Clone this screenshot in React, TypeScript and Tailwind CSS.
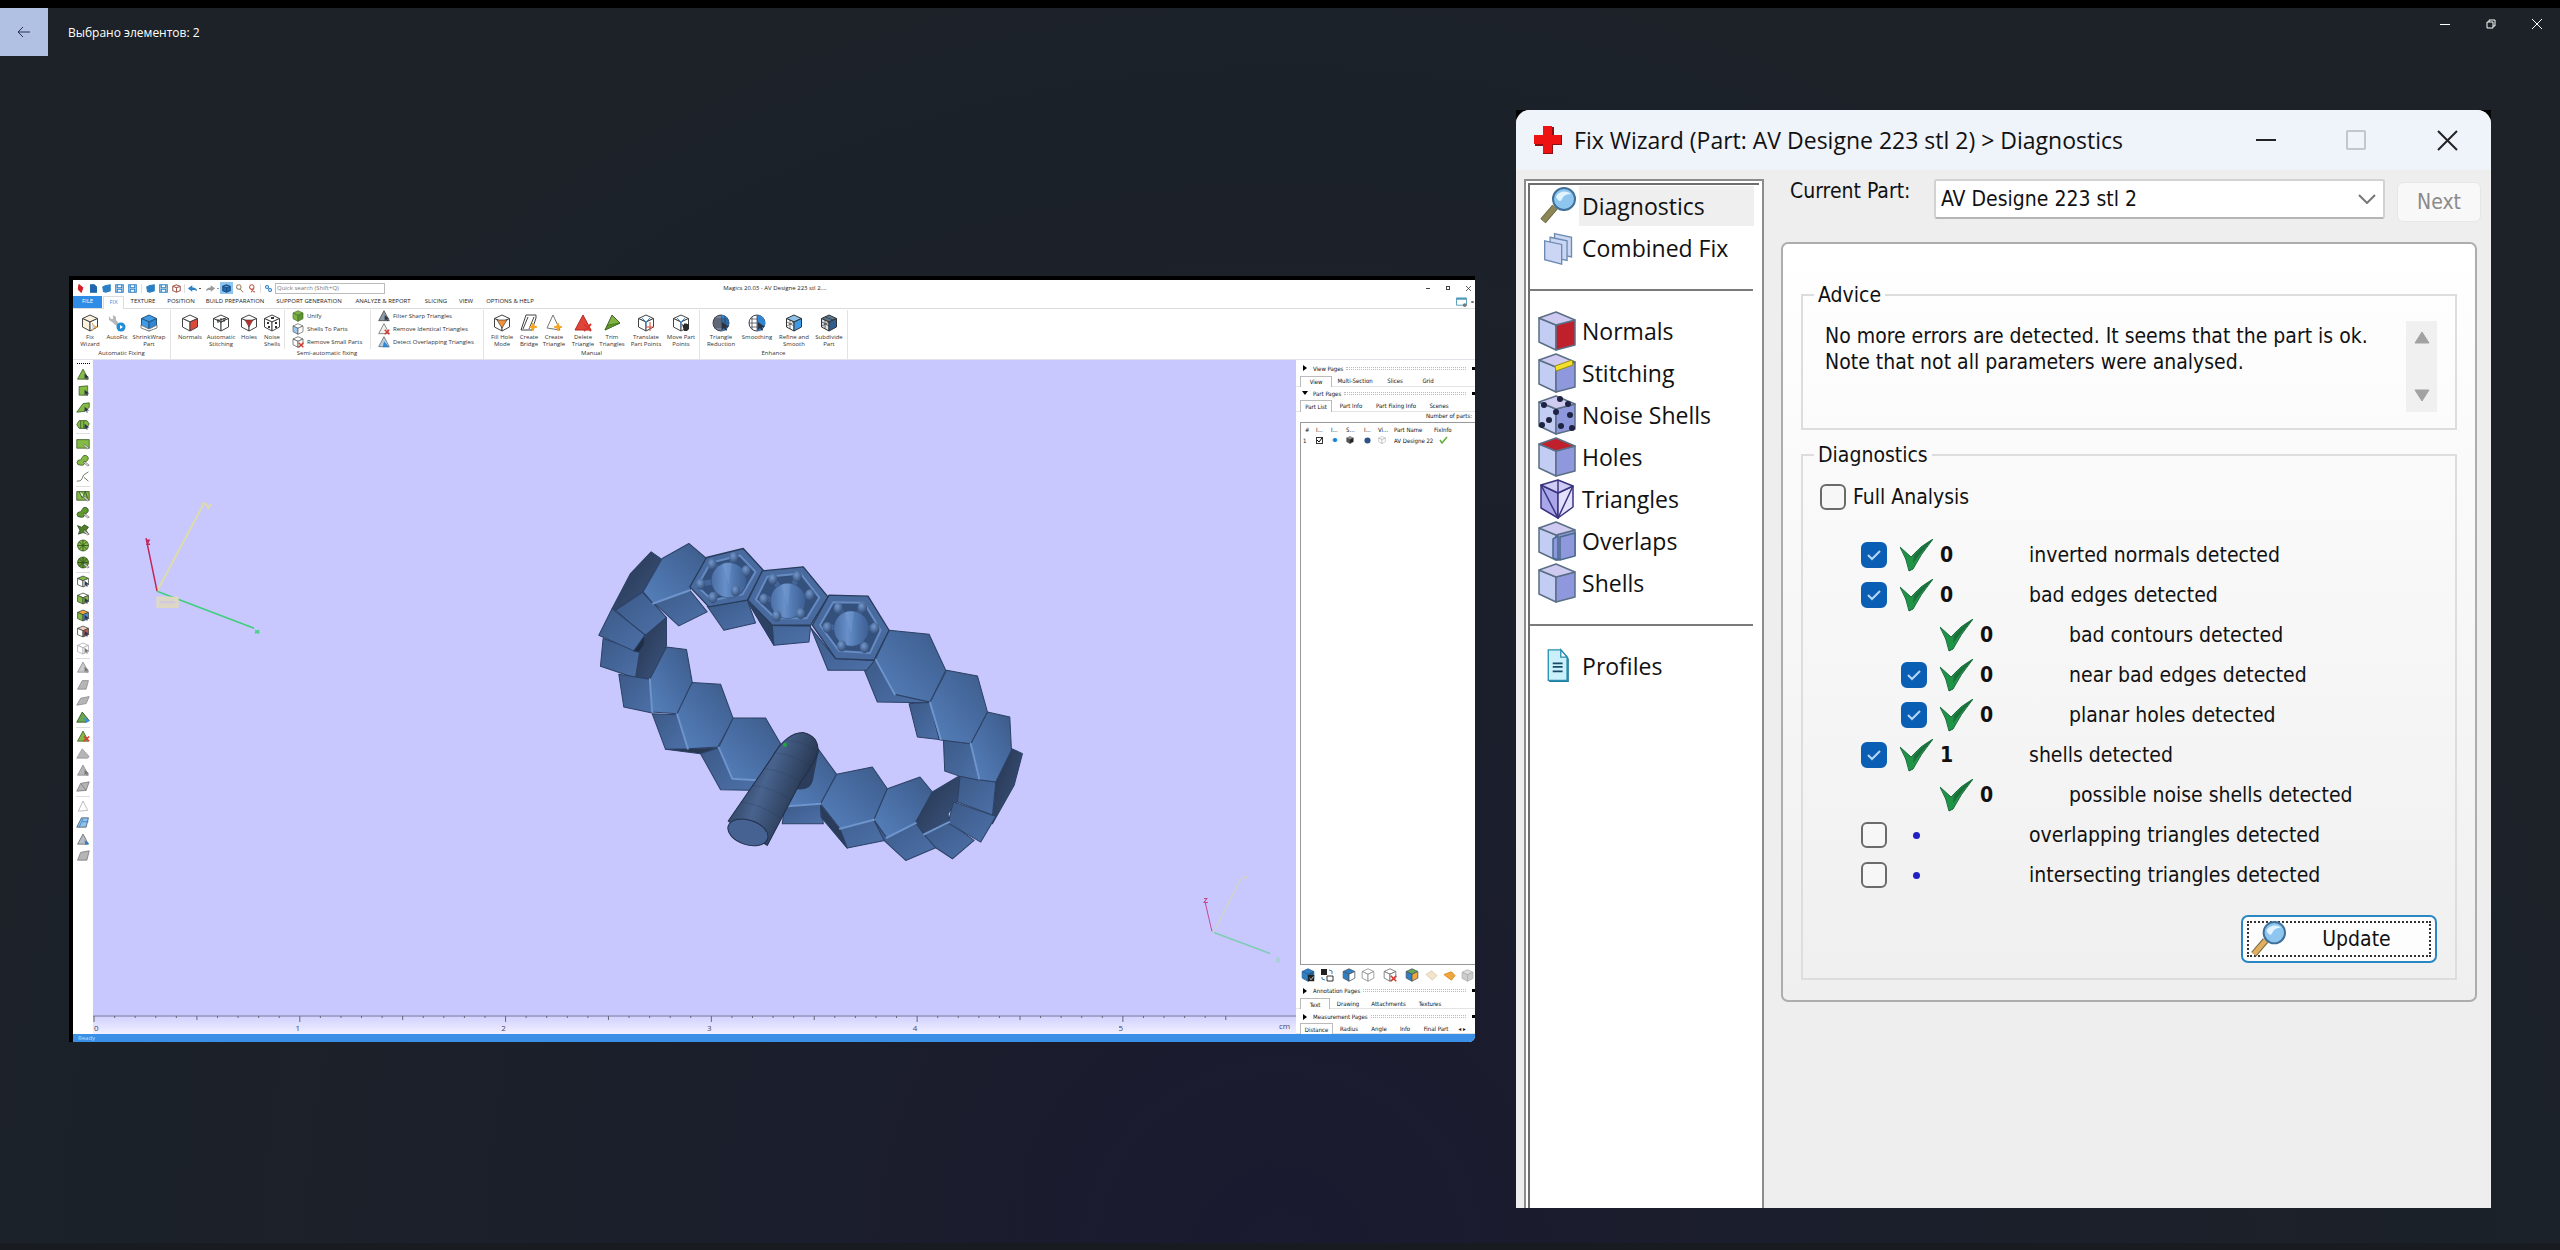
import type { ReactNode } from "react";

const SMALL = "font-['Open_Sans','Noto_Sans',sans-serif] text-[6px] leading-[7px]";
const PANEL = "font-['DejaVu_Sans_Condensed','DejaVu_Sans',sans-serif] text-[6px] leading-[7px]";

/* ---------- small wireframe cube used all over the ribbon ---------- */
function Cube({
  top = "#fff",
  left = "#fff",
  right = "#fff",
  line = "#444",
  className = "size-[18px]",
  children,
}: {
  top?: string;
  left?: string;
  right?: string;
  line?: string;
  className?: string;
  children?: ReactNode;
}) {
  return (
    <svg viewBox="0 0 18 18" className={className} aria-hidden="true">
      <g stroke={line} strokeWidth="1" strokeLinejoin="round">
        <path d="M1.5 4.5 9 1l7.500 3.500L9 8z" fill={top} />
        <path d="M1.500 4.500 9 8v9l-7.500-4z" fill={left} />
        <path d="M16.500 4.500 9 8v9l7.500-4z" fill={right} />
      </g>
      {children}
    </svg>
  );
}

function Tri({
  fill = "#8cbf45",
  line = "#4a5a3a",
  children,
  className = "h-[18px] w-[18px]",
  d = "M9 1 17 16 1 16z",
}: {
  fill?: string;
  line?: string;
  children?: ReactNode;
  className?: string;
  d?: string;
}) {
  return (
    <svg viewBox="0 0 18 18" className={className} aria-hidden="true">
      <path d={d} fill={fill} stroke={line} strokeLinejoin="round" />
      {children}
    </svg>
  );
}

const star = <path d="M13 9l1 3 3 1-3 1-1 3-1-3-3-1 3-1z" fill="#f5a623" stroke="#f5a623" />;
const redX = <path d="M10 10l7 7M17 10l-7 7" stroke="#d9372c" strokeWidth="2" />;
const cursor = <path d="M10 8v8l2-2 2 3 1-1-1-3h3z" fill="#2d3340" />;

/* ---------- ribbon ---------- */
type Item = { w: string; l1: string; l2?: string; icon: ReactNode };

const autoFix: Item[] = [
  {
    w: "w-[34px]",
    l1: "Fix",
    l2: "Wizard",
    icon: (
      <Cube top="#fdf3dd" left="#fdf3dd">
        <path d="M11 9l2 3 3 1-3 1-2 3" stroke="#e8a33c" fill="#cfe2f5" />
      </Cube>
    ),
  },
  {
    w: "w-5",
    l1: "AutoFix",
    icon: (
      <svg viewBox="0 0 18 18" className="size-[18px]" aria-hidden="true">
        <path d="M1 2v4l3 2 7 6 2-2-5-6V3L5 1v4L3 5z" fill="#b4b9bd" />
        <circle cx="13" cy="13" r="4.500" fill="#1b8fd8" />
        <path d="M12 11v4l3-2z" fill="#fff" />
      </svg>
    ),
  },
  {
    w: "w-11",
    l1: "ShrinkWrap",
    l2: "Part",
    icon: (
      <Cube top="#3f9be6" left="#3f9be6" right="#2f86d3" line="#25557f">
        <path d="M1 11l8 4 8-4v3l-8 3-8-3z" fill="#fff" stroke="#666" strokeWidth=".8" />
      </Cube>
    ),
  },
];

const semiAuto: Item[] = [
  { w: "w-[38px]", l1: "Normals", icon: <Cube right="#dc4a38" /> },
  {
    w: "w-6",
    l1: "Automatic",
    l2: "Stitching",
    icon: (
      <Cube>
        <path d="M6 5v4M9 4v5M12 4v4M5 7l9-3" stroke="#333" fill="none" />
      </Cube>
    ),
  },
  {
    w: "w-8",
    l1: "Holes",
    icon: (
      <Cube>
        <path d="M5 6h8l-4 7z" fill="#b9302b" stroke="#444" strokeWidth=".6" />
      </Cube>
    ),
  },
  {
    w: "w-[14px]",
    l1: "Noise",
    l2: "Shells",
    icon: (
      <Cube>
        <path d="M4 8h2v2H4zM8 3h3v2H8zM12 8h2v2h-2zM5 12h2v2H5zM12 12h2v2h-2z" fill="#333" />
      </Cube>
    ),
  },
];

const manual: Item[] = [
  {
    w: "w-9",
    l1: "Fill Hole",
    l2: "Mode",
    icon: (
      <Cube>
        <path d="M4 6h10l-5 8z" fill="#f0933a" stroke="#444" strokeWidth=".7" />
      </Cube>
    ),
  },
  {
    w: "w-[18px]",
    l1: "Create",
    l2: "Bridge",
    icon: (
      <Tri fill="#fff" line="#444" d="M6 1h10v3l-4 12H1z">
        <path d="M8 3 3 15M14 3 9 15" stroke="#444" />
        {star}
      </Tri>
    ),
  },
  { w: "w-8", l1: "Create", l2: "Triangle", icon: <Tri fill="#fff" line="#777" d="M8 1 15 16 2 14z">{star}</Tri> },
  { w: "w-[26px]", l1: "Delete", l2: "Triangle", icon: <Tri fill="#e0443a" line="#b32b25">{redX}</Tri> },
  {
    w: "w-8",
    l1: "Trim",
    l2: "Triangles",
    icon: (
      <Tri fill="#7fb53f" d="M9 1 17 9 2 16z">
        <path d="M2 16 17 9 5 11z" fill="#5f9a2c" stroke="#3e6b1d" strokeWidth=".7" />
      </Tri>
    ),
  },
  {
    w: "w-9",
    l1: "Translate",
    l2: "Part Points",
    icon: (
      <Cube>
        <path d="M5 4l4 4 4-4M9 8v6" stroke="#3a8fd6" fill="none" />
        <path d="M13 8v9M9 13h8" stroke="#e0443a" />
      </Cube>
    ),
  },
  {
    w: "w-[34px]",
    l1: "Move Part",
    l2: "Points",
    icon: (
      <Cube>
        <path d="M5 4l4 4 4-4M9 8v5" stroke="#3a8fd6" fill="none" />
        <path d="M10 10l2 1V9l1 1 1-1 1 1 2 0v5l-2 2h-3z" fill="#2a2a2a" />
      </Cube>
    ),
  },
];

function Globe({ fine }: { fine?: boolean }) {
  return (
    <svg viewBox="0 0 18 18" className="size-[18px]" aria-hidden="true">
      <circle cx="9" cy="9" r="8" fill={fine ? "#9db1c2" : "#fff"} stroke="#445" />
      <path d="M9 1a8 8 0 0 1 0 16z" fill="#2f86d3" />
      <path
        d={fine ? "M9 1v16M5 2v14M13 2v14M1 9h16M2 5h14M2 13h14M3 3v12M7 1v16M1 7h16M1 11h16" : "M9 1v16M4 3v12M1 9h8M3 5h6M3 13h6"}
        stroke="#334"
        strokeWidth=".7"
      />
      {cursor}
    </svg>
  );
}

const enhance: Item[] = [
  { w: "w-[42px]", l1: "Triangle", l2: "Reduction", icon: <Globe fine /> },
  { w: "w-[30px]", l1: "Smoothing", icon: <Globe /> },
  {
    w: "w-11",
    l1: "Refine and",
    l2: "Smooth",
    icon: (
      <Cube right="#3f9be6" top="#8fc1ea" line="#333">
        <path d="M2 8l7 4M5 6v9M2 12l7-4" stroke="#444" strokeWidth=".7" />
      </Cube>
    ),
  },
  {
    w: "w-[26px]",
    l1: "Subdivide",
    l2: "Part",
    icon: (
      <Cube right="#2f5f8e" top="#5b7894" left="#d7dee5" line="#333">
        <path d="M2 8l7 4M5 6v9M2 12l7-4M5 3l8 3" stroke="#333" strokeWidth=".7" />
      </Cube>
    ),
  },
];

function Items({ items }: { items: Item[] }) {
  return (
    <div className="flex">
      {items.map((it) => (
        <button key={it.l1 + it.l2} className={`flex flex-col items-center whitespace-nowrap ${it.w}`}>
          <span className="mb-[2px] block">{it.icon}</span>
          <span>{it.l1}</span>
          {it.l2 && <span>{it.l2}</span>}
        </button>
      ))}
    </div>
  );
}

function Group({ label, className = "", children }: { label: string; className?: string; children: ReactNode }) {
  return (
    <section className={`flex h-[49px] shrink-0 flex-col justify-between border-r border-[#e3e3e3] pt-[4px] pb-[2px] ${className}`}>
      <div className="flex">{children}</div>
      <div className="text-center">{label}</div>
    </section>
  );
}

function Lines({ rows, className }: { rows: [string, ReactNode][]; className: string }) {
  return (
    <div className={`-mt-[4px] flex flex-col ${className}`}>
      {rows.map(([t, i]) => (
        <button key={t} className="flex h-[13px] items-center gap-[3px] whitespace-nowrap">
          {i}
          {t}
        </button>
      ))}
    </div>
  );
}

const sm = "size-[12px] shrink-0";

function Ribbon() {
  return (
    <div className={`flex h-[51px] border-b border-[#e2e2ee] pt-px text-[#333] ${SMALL}`}>
      <Group label="Automatic Fixing" className="w-[98px]">
        <Items items={autoFix} />
      </Group>
      <Group label="Semi-automatic fixing" className="w-[313px]">
        <Items items={semiAuto} />
        <Lines
          className="ml-[5px] w-[86px] border-l border-[#e3e3e3] pl-[7px]"
          rows={[
            ["Unify", <Cube key="i" className={sm} top="#7db343" left="#7db343" right="#5e9430" line="#44702a" />],
            ["Shells To Parts", <Cube key="i" className={sm} left="#9cc7ee" line="#555" />],
            ["Remove Small Parts", <Cube key="i" className={sm}>{redX}</Cube>],
          ]}
        />
        <Lines
          className="border-l border-[#e3e3e3] pl-[7px]"
          rows={[
            ["Filter Sharp Triangles", <Tri key="i" className={sm} fill="#8c9aa8" line="#333">{cursor}</Tri>],
            ["Remove Identical Triangles", <Tri key="i" className={sm} fill="#f1f1f1" line="#555">{redX}</Tri>],
            ["Detect Overlapping Triangles", <Tri key="i" className={sm} fill="#b9cfe2" line="#555"><path d="M9 8l8 9H7z" fill="#2f86d3" /></Tri>],
          ]}
        />
      </Group>
      <Group label="Manual" className="w-[216px]">
        <Items items={manual} />
      </Group>
      <Group label="Enhance" className="w-[148px]">
        <Items items={enhance} />
      </Group>
    </div>
  );
}

/* ---------- quick access bar ---------- */
function Glyph({ d, fill = "none", stroke = "#2a7fc4", bg }: { d: string; fill?: string; stroke?: string; bg?: boolean }) {
  return (
    <button className={`grid h-[12px] w-[13px] shrink-0 place-items-center ${bg ? "bg-[#8fc4f0]" : ""}`} aria-label="Quick access command">
      <svg viewBox="0 0 12 12" className="size-[9px]">
        <path d={d} fill={fill} stroke={stroke} strokeWidth="1.400" />
      </svg>
    </button>
  );
}

function QuickBar() {
  const save = "M1 1h10v10H1zM3 1v4h6V1M3 11V7h6v4";
  const cube = "M1 3l5-2 5 2v6l-5 2-5-2zM1 3l5 2 5-2M6 5v6";
  return (
    <div className={`flex h-[16px] items-center pt-px pl-px ${SMALL}`}>
      <Glyph d="M4 1l5 4-2 6-4-4z" fill="#d42027" stroke="#d42027" />
      <Glyph d="M2 1h5l3 3v7H2z" fill="#1f66ad" stroke="#1f66ad" />
      <Glyph d="M1 4l4-2 6-1v8l-6 2-3-1z" fill="#2a7fc4" />
      <Glyph d={save} />
      <Glyph d={save} />
      <span className="mx-[2px] h-[9px] w-px bg-[#ddd]" />
      <Glyph d="M1 4l4-2 6-1v8l-6 2-3-1z" fill="#2a7fc4" />
      <Glyph d={save} />
      <Glyph d={cube} stroke="#a55b52" />
      <span className="mx-px h-[9px] w-px bg-[#ddd]" />
      <Glyph d="M1 6l4-3v2c3 0 5 1 6 3-2-1-4-1-6-1v2z" fill="#2a8be0" />
      <span className="mr-[3px] h-px w-[2px] bg-[#555]" />
      <Glyph d="M11 6L7 3v2C4 5 2 6 1 8c2-1 4-1 6-1v2z" fill="#999" stroke="#999" />
      <span className="mr-px h-px w-[2px] bg-[#999]" />
      <Glyph bg d={cube} fill="#1f6cb5" stroke="#174f86" />
      <Glyph d="M5 1a3 3 0 1 0 .1 0M7 7l4 4" stroke="#9a8468" />
      <Glyph d="M5 1a3 3 0 1 0 .1 0M3 6l6 5M8 6l-4 5" stroke="#c25a4a" />
      <span className="mx-px h-[9px] w-px bg-[#ddd]" />
      <Glyph d="M4 2a2 2 0 1 0 .1 0M8 6a2 2 0 1 0 .1 0" />
      <input
        aria-label="Quick search"
        placeholder="Quick search (Shift+Q)"
        className="h-[11px] w-[110px] border border-[#bbb] bg-white px-px text-[6px] placeholder:text-[#777]"
      />
      <div className="flex-1 pr-[260px] text-center text-[#222]">Magics 20.03 - AV Designe 223 stl 2....</div>
      <div className="flex gap-[14px] pr-[4px] text-[#444]">
        <button aria-label="Minimize viewer" className="grid h-2 w-[6px] place-items-center"><span className="h-px w-[4px] bg-[#444]" /></button>
        <button aria-label="Restore viewer" className="grid h-2 w-[6px] place-items-center"><span className="size-[4px] border border-[#444]" /></button>
        <button aria-label="Close viewer" className="grid h-2 w-[6px] place-items-center">
          <svg viewBox="0 0 6 6" className="size-[5px]"><path d="M0 0l6 6M6 0L0 6" stroke="#444" /></svg>
        </button>
      </div>
    </div>
  );
}

const tabs: [string, string][] = [
  ["TEXTURE", "w-[38px]"],
  ["POSITION", "w-[38px]"],
  ["BUILD PREPARATION", "w-[70px]"],
  ["SUPPORT GENERATION", "w-[78px]"],
  ["ANALYZE & REPORT", "w-[70px]"],
  ["SLICING", "w-9"],
  ["VIEW", "w-6"],
  ["OPTIONS & HELP", "w-[64px]"],
];

function TabBar() {
  return (
    <div className={`flex h-[13px] items-stretch border-b border-[#dcdcdc] text-[#222] ${SMALL}`}>
      <button className="w-[29px] bg-[#2e8be6] text-white">FILE</button>
      <button className="-mb-px ml-px w-[21px] border border-b-0 border-[#dcdcdc] bg-white text-[#3a8fd6]">FIX</button>
      {tabs.map(([t, w]) => (
        <button key={t} className={`flex shrink-0 items-center justify-center whitespace-nowrap ${w}`}>{t}</button>
      ))}
      <div className="flex flex-1 items-center justify-end gap-[3px]">
        <svg viewBox="0 0 13 11" className="h-[10px] w-[13px]" aria-hidden="true">
          <path d="M1 1h11v8H1z" fill="#fff" stroke="#4f9bb8" />
          <path d="M1 1h11v2H1z" fill="#4f9bb8" />
          <circle cx="10" cy="9" r="2" fill="#777" />
        </svg>
        <span className="mr-px h-[2px] w-[3px] rounded-full bg-[#777]" />
      </div>
    </div>
  );
}

/* ---------- marking tool strip ---------- */
const G = "#83bb45";
const toolGroups: ReactNode[][] = (() => {
  const t = (d: string, fill: string, line: string, extra?: ReactNode) => (
    <svg viewBox="0 0 18 16" className="h-[13px] w-[14px]" aria-hidden="true">
      <path d={d} fill={fill} stroke={line} strokeLinejoin="round" />
      {extra}
    </svg>
  );
  const cur = <path d="M11 7v7l2-2 1 3 1-1-1-2h3z" fill="#2b3350" />;
  const greyCur = <path d="M11 7v7l2-2 1 3 1-1-1-2h3z" fill="#777" />;
  const pen = <path d="M11 9l6 5-2 1-5-4z" fill="#ddd" stroke="#555" strokeWidth=".7" />;
  const tri = "M9 1 16 14H2z";
  const two = "M6 7a4 3 0 1 0 0 7 4 3 0 0 0 4-5 4 4 0 1 0-2-5z";
  const band = "M1 14 9 3l8-1v6l-6 5z";
  const round = "M9 1a7 7 0 1 0 .1 0M9 1v14M2 8h14M4 3l10 10M14 3 4 13";
  const box = (a: string, b: string, c: string, line = "#3f4a3a") => (
    <svg viewBox="0 0 18 16" className="h-[13px] w-[14px]" aria-hidden="true">
      <g stroke={line} strokeLinejoin="round">
        <path d="M2 4l7-3 7 3-7 3z" fill={a} />
        <path d="M2 4l7 3v8l-7-3z" fill={b} />
        <path d="M16 4 9 7v8l7-3z" fill={c} />
      </g>
      {line === "#aaa" ? greyCur : cur}
    </svg>
  );
  const grey = "#b5b5b5";
  return [
    [t(tri, G, "#3d5a26", cur), t("M4 3l11-1v12H4z", G, "#3d5a26", cur), t(band, G, "#3d5a26", cur), t("M4 3h10l3 4-3 6H4L1 8zM6 3v10M10 3v10", G, "#3d5a26", cur)],
    [t("M1 3h16v11H1z", G, "#3d5a26", pen), t(two, G, "#3d5a26", pen), t("M1 14c8 0 6-4 9-8l6-4M10 9l6 5", "none", "#4a5a3a")],
    [t("M1 3h16v11H1zM4 3l4 8 4-8 3 9", G, "#2f4a20", pen), t(two, "#5f9a2c", "#2f4a20", pen), t("M2 3l5 2 4-3 5 3-3 4 3 5-7-2-6 2 2-5z", "#4f7f2a", "#2f4a20", pen), t(round, G, "#2f4a20"), t(round, "#5f9a2c", "#2f4a20", pen)],
    [box(G, "#fff", "#fff"), box("#fff", G, G), box("#f0a63a", G, "#4a8fd6"), box("#f3c9c4", "#fff", "#c55a50"), box("#fff", "#fff", "#fff", "#aaa")],
    [t(tri, "#c9c9c9", "#888", greyCur), t("M2 14 8 3h8l-3 11z", grey, "#888"), t("M1 14 6 5l11-2-4 9z", grey, "#888"), t("M1 14 8 1l9 11-4 2z", "#6aa84f", "#2f4a20", <path d="M10 8l8 4-5 3z" fill="#3a8fe0" />)],
    [t(tri, G, "#3d5a26", <path d="M10 8l7 6M17 8l-7 6" stroke="#e03a2c" strokeWidth="2" />), t("M1 14 8 2l9 10-2 2z", grey, "#999"), t(tri, grey, "#888", greyCur), t("M1 14 6 4l11-2-4 11zM6 4l7 9", grey, "#777")],
    [t("M9 1 15 13 3 14z", "#fff", "#aaa"), t("M1 14 7 2h9l-3 12z", "#8fc1ea", "#456", <path d="M4 14 9 3M8 7h8" stroke="#2f7fc4" />), t(tri, "#b5bcc4", "#666", <path d="M11 9l6 4-5 2z" fill="#2f7fc4" />), t("M2 14 6 4l11-2-3 12z", grey, "#777")],
  ];
})();

function ToolStrip() {
  return (
    <div className="flex w-5 shrink-0 flex-col items-center bg-white pt-[3px]">
      <div className="w-[13px] border-t border-dotted border-black" />
      <div className="mt-[4px] flex h-[495px] flex-col items-center justify-between">
        {toolGroups.map((g, gi) =>
          [
            gi > 0 ? <span key={`s${gi}`} className="-my-px h-px w-[14px] bg-[#ddd]" /> : null,
            ...g.map((icon, i) => (
              <button key={`${gi}-${i}`} aria-label={`Marking tool ${gi + 1}.${i + 1}`}>{icon}</button>
            )),
          ],
        )}
      </div>
    </div>
  );
}

/* ---------- 3D scene ---------- */
const parts: { p: string; f: string }[] = [
  { p: "212,65 242,86 188,185 105,240 95,235 150,130", f: "url(#dark)" },
  { p: "105,240 188,185 258,262 192,318", f: "url(#side)" },
  { p: "165,443 175,362 200,312 258,262 258,345 212,445", f: "url(#dark)" },
  { p: "68,325 178,362 165,443 60,408", f: "url(#side)" },
  { p: "95,235 195,315 160,362 55,315", f: "url(#side)" },
  { p: "160,362 195,312 190,345 175,366", f: "#1f2c44" },
  { p: "115,432 208,447 215,548 130,530", f: "url(#side)" },
  { p: "208,447 258,350 318,358 335,455 290,550 215,545", f: "url(#face)" },
  { p: "255,657 322,655 410,652 360,670", f: "#27374f" },
  { p: "215,550 290,553 322,655 255,657", f: "url(#side)" },
  { p: "290,550 335,457 420,462 458,565 412,650 322,655", f: "url(#face)" },
  { p: "360,670 415,652 455,745 530,748 510,780 420,778", f: "url(#side)" },
  { p: "415,650 458,563 555,563 600,640 530,750 455,745", f: "url(#face)" },
  { p: "612,828 720,820 728,880 605,880", f: "url(#side)" },
  { p: "640,680 712,655 768,732 720,820 612,828", f: "url(#face)" },
  { p: "720,825 778,895 880,868 912,930 800,953 722,860", f: "url(#side)" },
  { p: "720,825 778,895 800,953 722,860", f: "#2a3c59" },
  { p: "720,820 768,732 875,710 920,775 880,868 778,895", f: "url(#face)" },
  { p: "880,870 918,922 1005,880 1065,952 975,990 912,932", f: "url(#side)" },
  { p: "880,868 920,775 1018,740 1055,785 1005,878 918,922", f: "url(#face)" },
  { p: "1030,912 1105,875 1180,930 1115,985 1065,952", f: "url(#side)" },
  { p: "1005,875 1055,785 1138,735 1130,812 1102,850 1105,878 1030,912", f: "url(#dark)" },
  { p: "1245,755 1293,655 1325,670 1300,765 1235,880 1238,840", f: "url(#dark)" },
  { p: "1118,815 1245,858 1200,935 1102,878", f: "url(#side)" },
  { p: "1138,738 1245,755 1235,854 1130,815", f: "url(#side)" },
  { p: "1088,628 1170,640 1195,750 1138,738 1092,722", f: "url(#side)" },
  { p: "1170,640 1220,545 1287,560 1292,660 1245,755 1195,748", f: "url(#face)" },
  { p: "985,520 1048,515 1082,628 1010,620", f: "url(#side)" },
  { p: "1048,515 1098,420 1190,437 1220,545 1170,640 1075,628", f: "url(#face)" },
  { p: "845,405 885,388 942,492 1048,517 890,515", f: "url(#side)" },
  { p: "885,385 925,300 1045,312 1095,420 1048,515 942,492", f: "url(#face)" },
  { p: "690,292 765,385 882,390 858,420 742,420", f: "url(#side)" },
  { p: "502,215 575,286 690,288 685,335 580,345", f: "url(#side)" },
  { p: "502,215 575,286 580,345", f: "#2d4163" },
  { p: "380,228 500,210 525,278 430,300", f: "url(#side)" },
  { p: "188,188 218,220 328,180 380,245 295,287", f: "url(#side)" },
  { p: "188,185 245,85 325,40 378,85 328,180 218,220", f: "url(#face)" },
];

const glints =
  "M218,220 328,180M208,447 215,545M290,552 322,655M415,652 455,745 530,750M612,828 720,820M778,895 880,868M918,922 1005,878M1030,912 1105,875M1170,640 1195,745M1048,517 1080,626M885,388 942,492";

const jewels = [
  { hex: "328,170 378,82 488,55 548,120 500,210 385,230", inner: "350,168 390,98 478,76 525,125 486,192 395,210", c: [445, 150], beads: [[395, 100], [460, 80], [497, 120], [465, 180], [397, 200], [360, 160]] },
  { hex: "502,210 545,122 668,110 742,200 690,285 575,285", inner: "526,208 560,140 660,130 716,202 678,264 585,264", c: [622, 212], beads: [[577, 145], [650, 137], [688, 192], [660, 248], [588, 255], [550, 205]] },
  { hex: "695,285 745,195 862,198 925,300 880,390 765,385", inner: "718,285 758,216 850,218 900,300 868,368 775,362", c: [812, 295], beads: [[773, 232], [845, 230], [882, 292], [852, 350], [783, 345], [740, 290]] },
];

function Scene() {
  return (
    <svg viewBox="93 360 1202 655" className="block w-full" role="img" aria-label="Honeycomb ring model">
      <defs>
        <linearGradient id="face" x1="0" y1="1" x2="1" y2="0">
          <stop offset="0" stopColor="#5680bb" />
          <stop offset=".6" stopColor="#466a9f" />
          <stop offset="1" stopColor="#3d5a87" />
        </linearGradient>
        <linearGradient id="side" x1="0" y1="0" x2="1" y2="1">
          <stop offset="0" stopColor="#3c5a88" />
          <stop offset="1" stopColor="#4c70a8" />
        </linearGradient>
        <linearGradient id="dark" x1="0" y1="0" x2="1" y2="1">
          <stop offset="0" stopColor="#26344e" />
          <stop offset="1" stopColor="#3b557f" />
        </linearGradient>
        <linearGradient id="tube" x1="0" y1="0" x2="1" y2=".5">
          <stop offset=".2" stopColor="#2b3c58" />
          <stop offset=".5" stopColor="#48638e" />
          <stop offset=".9" stopColor="#26354e" />
        </linearGradient>
        <linearGradient id="cone" x1="0" y1="0" x2="1" y2="0">
          <stop offset="0" stopColor="#4a6ea5" />
          <stop offset=".4" stopColor="#688fc8" />
          <stop offset=".65" stopColor="#5078b0" />
          <stop offset="1" stopColor="#3d5e92" />
        </linearGradient>
        <radialGradient id="bead" cx=".4" cy=".35" r=".7">
          <stop offset="0" stopColor="#7398cf" />
          <stop offset="1" stopColor="#304a72" />
        </radialGradient>
      </defs>
      <rect x="93" y="360" width="1202" height="655" fill="#c8c8ff" />

      <g fill="none" strokeWidth="2">
        <path d="M157 591 204 503M202 503l4 1 2 4 3-4" stroke="#dcdcaa" />
        <path d="M157 591 146 538M146 540l3 0-2 4 3 0" stroke="#c2255a" strokeWidth="1.500" />
        <path d="M157 591 254 628" stroke="#3fcf7c" strokeWidth="1.500" />
        <path d="M255 630l4 3M259 630l-4 3" stroke="#4fd08a" />
        <rect x="157" y="597" width="21" height="10" fill="#dcd6c8" stroke="#e4dfae" strokeWidth="1" />
        <path d="M160 602h15" stroke="#cfc8e0" />
      </g>
      <g fill="none" strokeWidth="1">
        <path d="M1213 931 1240 878M1242 875l2 3 2-2" stroke="#d2d2c8" strokeWidth="1.500" />
        <path d="M1211 931 1204 901M1203 898h3l-3 4h4" stroke="#c44a8c" />
        <path d="M1213 932 1269 953" stroke="#7fccb4" strokeWidth="1.500" />
        <path d="M1275 957l4 5M1279 957l-4 5" stroke="#8fd8b4" />
      </g>

      <g transform="translate(580 530) scale(.33333)" strokeLinejoin="round">
        {parts.map((s) => (
          <polygon key={s.p} points={s.p} fill={s.f} stroke="#2c4164" strokeWidth="3" />
        ))}
        <path d={glints} fill="none" stroke="#6f95cd" strokeWidth="6" strokeLinecap="round" />
        {jewels.map((j) => (
          <g key={j.hex}>
            <polygon points={j.hex} fill="#486a9e" stroke="#283c5c" strokeWidth="4" />
            <polygon points={j.inner} fill="#34507d" stroke="#668bc2" strokeWidth="6" />
            {j.beads.map(([x, y]) => (
              <path key={`l${x}`} d={`M${x} ${y} L${j.c[0]} ${j.c[1]}`} stroke="#45669a" strokeWidth="16" />
            ))}
            <circle cx={j.c[0]} cy={j.c[1]} r="53" fill="url(#cone)" stroke="#34507a" strokeWidth="2" />
            <path d={`M${j.c[0]} ${j.c[1] + 15} L${j.c[0] - 20} ${j.c[1] - 49} A53 53 0 0 1 ${j.c[0] + 8} ${j.c[1] - 52}z`} fill="#7ca2d8" opacity=".35" />
            {j.beads.map(([x, y]) => (
              <ellipse key={`b${x}`} cx={x} cy={y + 2} rx="14" ry="17" fill="url(#bead)" />
            ))}
          </g>
        ))}
        <path d="M640 775 Q690 785 697 750 L714 660 L660 640z" fill="#2b3d5a" />
        <path d="M443 872 575 680 Q620 604 670 607 Q716 618 712 668 Q700 700 660 755 L560 945z" fill="url(#tube)" stroke="#22304a" strokeWidth="3" />
        <path d="M480 815q60 5 122 50M515 765q60 5 118 45M550 715q60 5 112 42M585 668q60 5 105 40M615 630q50 0 88 32" fill="none" stroke="#1f2c44" strokeWidth="2" opacity=".3" />
        <ellipse cx="502" cy="906" rx="62" ry="37" transform="rotate(18 502 906)" fill="#456292" stroke="#22304a" strokeWidth="3" />
        <circle cx="613" cy="643" r="6" fill="#1fa83a" />
      </g>
    </svg>
  );
}

function Ruler() {
  const ticks = Array.from({ length: 56 }, (_, i) => i);
  return (
    <svg viewBox="0 0 1202 19" className="block w-full bg-linear-to-b from-[#cfcfff] to-[#f1f0ff]" role="img" aria-label="Ruler in centimetres">
      <path d="M0 1h1202" stroke="#77779a" />
      {ticks.map((i) => (
        <path key={i} d={`M${1 + i * 20.56} 1v${i % 10 === 0 ? 6 : i % 5 === 0 ? 4 : 2}`} stroke="#667" />
      ))}
      <g fontSize="8" fill="#444466" className="font-['Open_Sans',sans-serif]">
        <text x="1" y="16">0</text>
        {[1, 2, 3, 4, 5].map((n) => (
          <text key={n} x={n * 205.6 - 1} y="16" textAnchor="middle">{n}</text>
        ))}
        <text x="1185" y="14">cm</text>
      </g>
    </svg>
  );
}

/* ---------- side pages ---------- */
function PageHead({ title, open, className = "" }: { title: string; open?: boolean; className?: string }) {
  return (
    <div className={`flex h-[9px] items-center gap-[3px] pl-[6px] ${className}`}>
      <svg viewBox="0 0 6 6" className="size-[6px]" aria-hidden="true">
        <path d={open ? "M0 1h6L3 5z" : "M1 0v6l4-3z"} />
      </svg>
      <span className="ml-[2px] whitespace-nowrap">{title}</span>
      <span className="h-[3px] flex-1 border-y border-dotted border-[#bbb]" />
      <span className="ml-[3px] size-[3px] bg-black" />
    </div>
  );
}

function PageTabs({ items, tall }: { items: [string, string][]; tall?: boolean }) {
  return (
    <div className={`flex items-stretch border-b border-[#e4e4e4] pl-[4px] ${tall ? "h-[12px]" : "h-[11px]"}`}>
      {items.map(([t, w], i) => (
        <button
          key={t}
          className={`flex items-center justify-center whitespace-nowrap ${w} ${i === 0 ? "-mb-px border border-b-0 border-[#bbb] bg-white" : ""}`}
        >
          {t}
        </button>
      ))}
    </div>
  );
}

function SidePanel() {
  const th = "p-0 text-left font-normal";
  return (
    <aside className={`flex w-[179px] shrink-0 flex-col overflow-hidden bg-white text-[#111] ${PANEL}`}>
      <PageHead title="View Pages" className="mt-[4px]" />
      <div className="mt-[3px]"><PageTabs items={[["View", "w-8"], ["Multi-Section", "w-[46px]"], ["Slices", "w-[34px]"], ["Grid", "w-8"]]} /></div>
      <PageHead title="Part Pages" open className="mt-[2px]" />
      <div className="mt-[2px]"><PageTabs tall items={[["Part List", "w-8"], ["Part Info", "w-[38px]"], ["Part Fixing Info", "w-[52px]"], ["Scenes", "w-[34px]"]]} /></div>
      <div className="mr-[3px] text-right">Number of parts:</div>
      <div className="mt-[3px] ml-[4px] flex-1 border border-r-0 border-[#999]">
        <table className="mt-[2px] w-full table-fixed border-collapse">
          <thead>
            <tr className="h-[10px]">
              <th className={`w-[15px] pl-[4px] ${th}`}>#</th>
              <th className={`w-[15px] ${th}`}>I...</th>
              <th className={`w-[15px] ${th}`}>I...</th>
              <th className={`w-[18px] ${th}`}>S...</th>
              <th className={`w-[14px] ${th}`}>I...</th>
              <th className={`w-[16px] ${th}`}>Vi...</th>
              <th className={`w-[40px] whitespace-nowrap ${th}`}>Part Name</th>
              <th className={th}>FixInfo</th>
            </tr>
          </thead>
          <tbody>
            <tr className="h-[11px]">
              <td className="pl-[2px]">1</td>
              <td>
                <label className="grid size-[7px]">
                  <input type="checkbox" defaultChecked aria-label="Part loaded" className="col-start-1 row-start-1 size-[7px] appearance-none border border-[#333] bg-white" />
                  <svg viewBox="0 0 7 7" className="pointer-events-none col-start-1 row-start-1 size-[7px]"><path d="M1 3l2 2 3-4" fill="none" stroke="#000" /></svg>
                </label>
              </td>
              <td><svg viewBox="0 0 8 8" className="size-[8px]"><path d="M0 4q4-5 8 0-4 5-8 0" fill="#cfe4f7" /><circle cx="4" cy="4" r="2" fill="#1b7fd0" /></svg></td>
              <td><Cube className="size-[8px]" left="#555" right="#222" top="#999" /></td>
              <td><svg viewBox="0 0 8 8" className="size-[7px]"><circle cx="4" cy="4" r="3.500" fill="#2d5286" /></svg></td>
              <td><Cube className="size-[8px]" line="#999" /></td>
              <td className="overflow-hidden whitespace-nowrap">AV Designe 22</td>
              <td><svg viewBox="0 0 9 8" className="ml-[5px] h-[8px] w-[9px]"><path d="M1 4l2 3 5-6" fill="none" stroke="#5fae3a" strokeWidth="1.500" /></svg></td>
            </tr>
          </tbody>
        </table>
      </div>
      <div className="flex h-[20px] items-center gap-[5px] pl-[5px]">
        <Cube className="size-[14px] shrink-0" top="#2f7fc4" left="#2f7fc4" right="#245f94" line="#245f94"><path d="M9 9h8v8H9z" fill="#222" /><path d="M11 13l2 2 3-4" stroke="#fff" fill="none" /></Cube>
        <svg viewBox="0 0 14 14" className="size-[14px] shrink-0"><path d="M1 1h6v6H1z" fill="#222" /><path d="M7 8h6v5H7z" fill="#fff" stroke="#333" /><path d="M9 2l3 1v3M5 12l-3-1V9" stroke="#2f7fc4" fill="none" /></svg>
        <Cube className="ml-[3px] size-[14px] shrink-0" top="#2f7fc4" left="#2f7fc4" line="#456" />
        <Cube className="size-[14px] shrink-0" line="#888" />
        <Cube className="ml-[3px] size-[14px] shrink-0" line="#666">{redX}</Cube>
        <Cube className="ml-[3px] size-[14px] shrink-0" top="#6aa84f" left="#2f7fc4" right="#f0a63a" line="#456" />
        <svg viewBox="0 0 14 14" className="ml-px size-[13px] shrink-0"><path d="M1 6l6-4 6 5-5 5z" fill="#f3e3c8" stroke="#ddd0b8" /></svg>
        <svg viewBox="0 0 14 14" className="size-[13px] shrink-0"><path d="M1 6l8-3 4 4-4 5z" fill="#f0a63a" stroke="#d98a20" /></svg>
        <Cube className="size-[13px] shrink-0" top="#ddd" left="#ccc" right="#ccc" line="#aaa" />
      </div>
      <PageHead title="Annotation Pages" className="mt-px" />
      <div className="mt-[3px]"><PageTabs items={[["Text", "w-[30px]"], ["Drawing", "w-9"], ["Attachments", "w-[45px]"], ["Textures", "w-[38px]"]]} /></div>
      <PageHead title="Measurement Pages" className="mt-[3px]" />
      <div className="mt-[2px]"><PageTabs items={[["Distance", "w-[33px]"], ["Radius", "w-[32px]"], ["Angle", "w-7"], ["Info", "w-6"], ["Final Part", "w-[38px]"], ["◂ ▸", "w-[14px]"]]} /></div>
    </aside>
  );
}

function Viewer() {
  return (
    <div className="min-w-0 flex-[1405] overflow-hidden rounded-br-md border-t-4 border-l-4 border-black bg-white">
      <QuickBar />
      <TabBar />
      <Ribbon />
      <div className="flex">
        <ToolStrip />
        <div className="min-w-0 flex-1">
          <Scene />
          <Ruler />
        </div>
        <SidePanel />
      </div>
      <div className="h-[8px] overflow-hidden bg-[#3a8fe6] pl-[5px] text-[6px] leading-[9px] text-[#bfdcf8]">Ready</div>
    </div>
  );
}

/* ---------- Fix Wizard dialog ---------- */
function Magnifier({ className, handle = "#8d8757" }: { className: string; handle?: string }) {
  return (
    <svg viewBox="0 0 38 38" className={className} aria-hidden="true">
      <path d="M17 20 5 34" stroke="#6b6540" strokeWidth="7" />
      <path d="M17 20 5 34" stroke={handle} strokeWidth="5" />
      <circle cx="26" cy="12" r="11" fill="#8fc6f0" stroke="#3f7098" strokeWidth="2" />
      <path d="M18 10a9 8 0 0 1 15-3q-7 0-9 5t-6-2z" fill="#e0f3ff" />
    </svg>
  );
}

function NavCube({ kind }: { kind: string }) {
  const red = "#c0202c";
  if (kind === "Triangles")
    return (
      <svg viewBox="0 0 38 40" className="h-10 w-[38px]" aria-hidden="true">
        <g stroke="#3a3480" strokeWidth="1.500" strokeLinejoin="round">
          <path d="M3 6 20 14 20 39 3 29z" fill="#a9a6ea" />
          <path d="M20 14 35 7v21L20 39z" fill="#e3e1fb" />
          <path d="M3 6 20 1l15 6-15 7z" fill="#cfccf6" />
          <path d="M3 6 20 39 35 7M20 1v13" fill="none" />
        </g>
      </svg>
    );
  return (
    <svg viewBox="0 0 38 40" className="h-10 w-[38px]" aria-hidden="true">
      <g stroke="#5a6f86" strokeWidth="1.500" strokeLinejoin="round">
        <path d="M1 7 18 14v25L1 31z" fill="#c3cdf3" />
        <path d="M18 14 37 9v25l-19 5z" fill={kind === "Normals" ? red : "#8f98dc"} />
        <path d="M1 7 18 1l19 8-19 5z" fill={kind === "Holes" ? red : "#cfcaf0"} />
      </g>
      {kind === "Stitching" && <path d="M17 13l17-6 1 5-14 5-3 1z" fill="#f2e02c" stroke="#9a8d10" />}
      {kind === "Noise Shells" && (
        <g fill="#1d2340">
          {[[6, 10], [22, 4], [30, 9], [18, 17], [32, 20], [11, 25], [23, 31], [34, 33], [4, 30]].map(([x, y]) => (
            <circle key={`${x}-${y}`} cx={x} cy={y} r="3" />
          ))}
        </g>
      )}
      {kind === "Overlaps" && (
        <path d="M15 18l5-3v24l-5-2zM22 16l15-4v23l-15 4z" fill="#8f98dc" stroke="#4a6a8c" strokeWidth="1.500" />
      )}
    </svg>
  );
}

function NavIcon({ name }: { name: string }) {
  if (name === "Diagnostics") return <Magnifier className="size-[38px]" />;
  if (name === "Combined Fix")
    return (
      <svg viewBox="0 0 38 38" className="ml-1 size-[34px]" aria-hidden="true">
        <g fill="#cbd6f5" stroke="#6d8bb0" strokeWidth="1.500">
          <path d="M14 3l19 4v22l-19-4z" />
          <path d="M9 7l19 4v22L9 29z" />
          <path d="M3 11l19 4v22L3 32z" />
        </g>
      </svg>
    );
  if (name === "Profiles")
    return (
      <svg viewBox="0 0 38 38" className="ml-1 size-[38px]" aria-hidden="true">
        <path d="M8 2h14l8 9v26H8z" fill="#1f7a9c" />
        <path d="M7 1h14l7 8v26H7z" fill="#c9f0fb" stroke="#2a8fb0" strokeWidth="1.500" />
        <path d="M21 1v8h7z" fill="#fff" stroke="#2a8fb0" strokeWidth="1.500" />
        <path d="M12 16h11M12 20h11M12 25h11" stroke="#174a6b" strokeWidth="2" />
      </svg>
    );
  return <NavCube kind={name} />;
}

const nav: (string | null)[] = [
  "Diagnostics", "Combined Fix", null, "Normals", "Stitching", "Noise Shells", "Holes", "Triangles", "Overlaps", "Shells", null, "Profiles",
];

function Nav() {
  return (
    <nav className="flex w-[240px] shrink-0 flex-col border-2 border-b-0 border-[#8c8c8c] bg-white pt-[2px] pl-[2px]">
      <div className="mr-[3px] flex-1 border-t-2 border-l-2 border-[#6e6e6e] font-['Open_Sans','Noto_Sans',sans-serif] text-[23px] leading-none text-[#111]">
        {nav.map((n, i) =>
          n === null ? (
            <div key={i} className="mr-[6px] flex h-[41px] items-center"><hr className="w-full border-t-2 border-[#7b7b7b]" /></div>
          ) : (
            <button key={n} className="mr-[6px] flex h-[42px] w-[224px] items-center pl-2">
              <span className="flex w-[38px] shrink-0"><NavIcon name={n} /></span>
              <span className={`ml-[3px] flex h-10 flex-1 items-center pl-[3px] whitespace-nowrap ${i === 0 ? "bg-[#efefef]" : ""}`}>{n}</span>
            </button>
          ),
        )}
      </div>
    </nav>
  );
}

function Check({ id, checked }: { id: string; checked?: boolean }) {
  return (
    <span className="grid size-[26px] shrink-0">
      <input
        id={id}
        type="checkbox"
        defaultChecked={checked}
        className="peer col-start-1 row-start-1 size-[26px] appearance-none rounded-[6px] border-2 border-[#6b6b6b] bg-[#f7f7f7] checked:border-[#0a5fb4] checked:bg-[#0a5fb4]"
      />
      <svg viewBox="0 0 26 26" className="pointer-events-none invisible col-start-1 row-start-1 size-[26px] peer-checked:visible" aria-hidden="true">
        <path d="M7 13l4 4 8-8" fill="none" stroke="#b9d6f5" strokeWidth="2" />
      </svg>
    </span>
  );
}

function Tick() {
  return (
    <svg viewBox="0 0 33 33" className="size-[33px]" aria-hidden="true">
      <path d="M0 8 11 18Q20 7 33 0 20 16 13 30L9 32Q7 20 0 8z" fill="#1f9447" stroke="#17693a" strokeWidth="1" />
      <path d="M14 17Q22 7 32 1 22 12 13 24z" fill="#1b6e3c" />
    </svg>
  );
}

type Row = { label: string; n?: number; sub?: boolean; check?: boolean };
const rows: Row[] = [
  { label: "inverted normals detected", n: 0, check: true },
  { label: "bad edges detected", n: 0, check: true },
  { label: "bad contours detected", n: 0, sub: true },
  { label: "near bad edges detected", n: 0, sub: true, check: true },
  { label: "planar holes detected", n: 0, sub: true, check: true },
  { label: "shells detected", n: 1, check: true },
  { label: "possible noise shells detected", n: 0, sub: true },
  { label: "overlapping triangles detected", check: false },
  { label: "intersecting triangles detected", check: false },
];

function Dialog() {
  return (
    <div className="min-w-0 flex-[977] bg-black">
      <section
        aria-label="Fix Wizard"
        className="overflow-hidden rounded-t-[14px] bg-[#eeeeef] font-['DejaVu_Sans_Condensed','DejaVu_Sans',sans-serif] text-[21px] leading-[26px] text-[#111]"
      >
        <header className="flex h-[60px] items-center bg-[#eff3fa] pr-[33px] pl-[18px] font-['Open_Sans','Noto_Sans',sans-serif] text-[23px]">
          <svg viewBox="0 0 28 28" className="size-7" aria-hidden="true">
            <path d="M10 1h10v8h8v10h-9v9H9v-8H1V10h9z" fill="#8e0f10" />
            <path d="M9 0h9v9h9v9h-9v9H9v-9H0V9h9z" fill="#ee1212" />
          </svg>
          <h1 className="ml-3 flex-1 whitespace-nowrap">Fix Wizard (Part: AV Designe 223 stl 2) &gt; Diagnostics</h1>
          <button aria-label="Minimize" className="mr-[70px] grid size-5 place-items-center"><span className="h-[2px] w-5 bg-[#222]" /></button>
          <button aria-label="Maximize" disabled className="mr-[71px] size-5 rounded-[2px] border-2 border-[#c3c6cc]" />
          <button aria-label="Close" className="size-[21px]">
            <svg viewBox="0 0 21 21"><path d="M1 1l19 19M20 1 1 20" stroke="#222" strokeWidth="2" /></svg>
          </button>
        </header>

        <div className="flex pt-[9px] pl-2">
          <Nav />
          <div className="min-w-0 flex-1 pb-[206px] pl-[17px]">
            <div className="flex h-[43px] pr-[10px] pl-[9px]">
              <label htmlFor="part" className="w-[144px] shrink-0 leading-6 whitespace-nowrap">Current Part:</label>
              <div className="grid h-10 flex-1 items-center">
                <select id="part" className="col-start-1 row-start-1 h-10 w-full appearance-none rounded-[3px] border-2 border-[#d2d2d2] border-b-[#b5b5b5] bg-white pl-[5px]">
                  <option>AV Designe 223 stl 2</option>
                </select>
                <svg viewBox="0 0 18 10" className="pointer-events-none col-start-1 row-start-1 mr-[9px] h-[10px] w-[18px] justify-self-end" aria-hidden="true">
                  <path d="M1 1l8 8 8-8" fill="none" stroke="#777" strokeWidth="2" />
                </svg>
              </div>
              <button disabled className="mt-[3px] ml-3 h-10 w-[84px] rounded-md border border-[#e6e6e6] bg-[#f8f8f8] text-[#8a8a8a]">Next</button>
            </div>

            <div className="mt-[20px] mr-[14px] rounded-[7px] border-2 border-[#adadad] bg-linear-to-b from-white to-[#efefef] px-[18px] pt-[37px] pb-5">
              <fieldset className="border-2 border-[#dddddd]">
                <legend className="ml-[11px] px-1 leading-7">Advice</legend>
                <div className="flex justify-between pt-3 pr-[18px] pb-4 pl-[22px]">
                  <p className="pt-[2px]">
                    No more errors are detected. It seems that the part is ok.
                    <br />
                    Note that not all parameters were analysed.
                  </p>
                  <div className="flex h-[91px] w-[31px] shrink-0 flex-col items-center justify-between bg-[#f0f0f0] py-[10px]">
                    <button aria-label="Scroll up" className="flex"><svg viewBox="0 0 16 13" className="h-[13px] w-4"><path d="M8 1l7 11H1z" fill="#a2a2a2" stroke="#a2a2a2" strokeLinejoin="round" /></svg></button>
                    <button aria-label="Scroll down" className="flex"><svg viewBox="0 0 16 13" className="h-[13px] w-4"><path d="M8 12l7-11H1z" fill="#a2a2a2" stroke="#a2a2a2" strokeLinejoin="round" /></svg></button>
                  </div>
                </div>
              </fieldset>

              <fieldset className="mt-[11px] border-2 border-[#dddddd]">
                <legend className="ml-[11px] px-1 leading-7">Diagnostics</legend>
                <div className="pt-[15px] pr-[18px] pb-[15px]">
                  <div className="flex items-center gap-[7px] pl-[17px]">
                    <Check id="full" />
                    <label htmlFor="full">Full Analysis</label>
                  </div>
                  <ul className="mt-[25px]">
                    {rows.map((r, i) => (
                      <li key={r.label} className={`flex h-10 items-center whitespace-nowrap ${r.sub ? "pl-[98px]" : "pl-[58px]"}`}>
                        {r.check === undefined ? <span className="w-[39px]" /> : <span className="w-[39px]"><Check id={`r${i}`} checked={r.check} /></span>}
                        <span className="flex w-10 items-center">
                          {r.n === undefined ? <span className="ml-[13px] size-[7px] rounded-full bg-[#2020c4]" /> : <Tick />}
                        </span>
                        <span className="w-[89px] font-bold">{r.n}</span>
                        {r.check === undefined ? <span>{r.label}</span> : <label htmlFor={`r${i}`}>{r.label}</label>}
                      </li>
                    ))}
                  </ul>
                  <div className="mt-5 flex justify-end">
                    <button className="h-12 w-[196px] rounded-[7px] border-2 border-[#2b86c4] bg-[#fdfdfd] p-[4px]">
                      <span className="flex h-full items-center border-2 border-dotted border-[#333]">
                        <Magnifier className="size-[37px] shrink-0" handle="#e0ae5c" />
                        <span className="flex-1 pr-[2px]">Update</span>
                      </span>
                    </button>
                  </div>
                </div>
              </fieldset>
            </div>
          </div>
        </div>
      </section>
    </div>
  );
}

export default function App() {
  return (
    <div className="flex min-h-screen flex-col border-t-8 border-black bg-[radial-gradient(ellipse_at_50%_100%,#1a1a30_0%,#1b1f2b_35%,#1c2228_75%)] font-['Open_Sans','Noto_Sans',sans-serif]">
      <header className="flex h-12 items-start text-white">
        <button aria-label="Back" className="grid size-12 place-items-center bg-[#b1c1e3]">
          <svg viewBox="0 0 14 14" className="size-[14px]"><path d="M13 7H1M6 2 1 7l5 5" fill="none" stroke="#26344e" /></svg>
        </button>
        <p className="flex-1 pt-4 pl-5 text-[12px] leading-[18px]">Выбрано элементов: 2</p>
        <button aria-label="Minimize window" className="grid h-8 w-[46px] place-items-center"><span className="h-px w-[10px] bg-white" /></button>
        <button aria-label="Restore window" className="grid h-8 w-[46px] place-items-center">
          <svg viewBox="0 0 10 10" className="size-[10px]"><path d="M1 3h6v6H1zM3 3V1h6v6H7" fill="none" stroke="#fff" /></svg>
        </button>
        <button aria-label="Close window" className="grid h-8 w-[46px] place-items-center">
          <svg viewBox="0 0 10 10" className="size-[10px]"><path d="M0 0l10 10M10 0 0 10" stroke="#fff" /></svg>
        </button>
      </header>
      <main className="flex flex-1 items-center gap-[41px] px-[69px] pt-[19px]">
        <Viewer />
        <Dialog />
      </main>
      <footer className="h-[7px] bg-[#181b20]" />
    </div>
  );
}
